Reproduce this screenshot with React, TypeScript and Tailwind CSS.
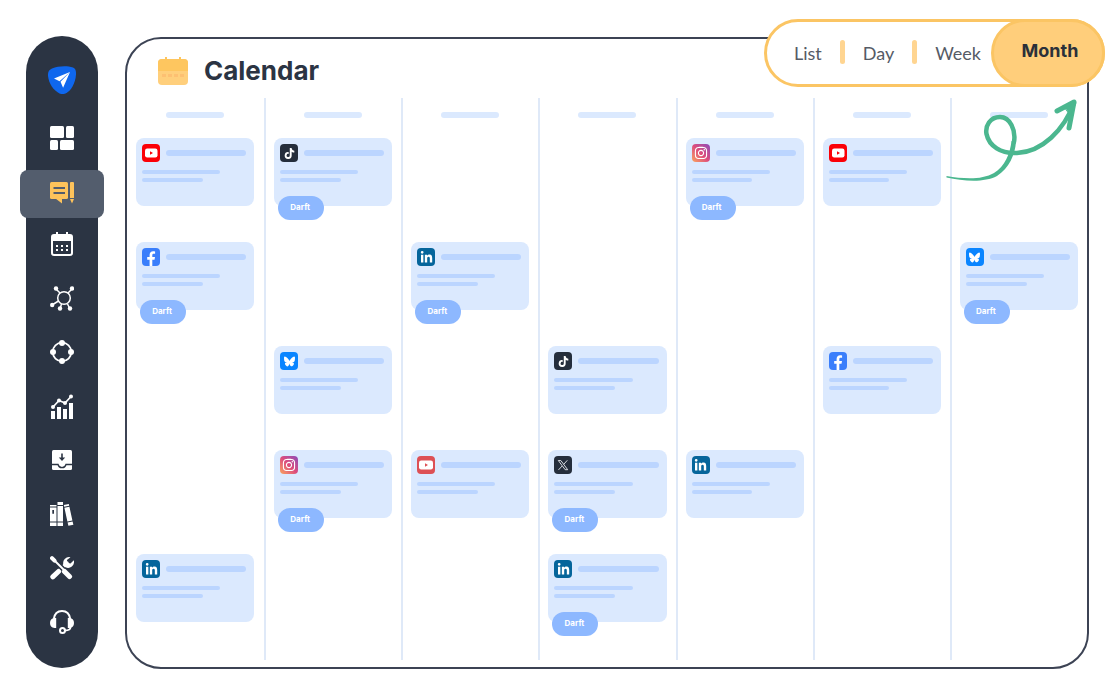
import React from 'react';
import { FaTiktok, FaLinkedinIn, FaInstagram } from 'react-icons/fa';
import { FaBluesky } from 'react-icons/fa6';

type Network = 'youtube' | 'youtubeMuted' | 'tiktok' | 'facebook' | 'linkedin' | 'bluesky' | 'instagram' | 'x';

interface Post {
  network: Network;
  draft?: boolean;
}

// one array per day column, null = empty slot
const columns: (Post | null)[][] = [
  [{ network: 'youtube' }, { network: 'facebook', draft: true }, null, null, { network: 'linkedin' }],
  [{ network: 'tiktok', draft: true }, null, { network: 'bluesky' }, { network: 'instagram', draft: true }, null],
  [null, { network: 'linkedin', draft: true }, null, { network: 'youtubeMuted' }, null],
  [null, null, { network: 'tiktok' }, { network: 'x', draft: true }, { network: 'linkedin', draft: true }],
  [{ network: 'instagram', draft: true }, null, null, { network: 'linkedin' }, null],
  [{ network: 'youtube' }, null, { network: 'facebook' }, null, null],
  [null, { network: 'bluesky', draft: true }, null, null, null],
];

const badgeColors: Record<Network, string> = {
  youtube: 'bg-[#fb0007]',
  youtubeMuted: 'bg-[#dd5055]',
  tiktok: 'bg-[#252e3c]',
  facebook: 'bg-[#3a7efb]',
  linkedin: 'bg-[#05659b]',
  bluesky: 'bg-[#0a85ff]',
  instagram: 'bg-linear-to-tr from-[#f9a25a] via-[#dc4a7c] to-[#8c46b8]',
  x: 'bg-[#252e3c]',
};

const YoutubeGlyph = ({ hole, wide }: { hole: string; wide?: boolean }) => (
  <svg viewBox="0 0 18 18" className="size-[18px]">
    <rect x={wide ? 2 : 3} y="4.5" width={wide ? 14 : 12.5} height="9" rx="2.2" fill="#fff" />
    <path d="M8 7.2v3.6L11 9z" fill={hole} />
  </svg>
);

const glyphs: Record<Network, React.ReactNode> = {
  youtube: <YoutubeGlyph hole="#fb0007" />,
  youtubeMuted: <YoutubeGlyph hole="#dd5055" wide />,
  tiktok: <FaTiktok size={11} />,
  facebook: (
    <svg viewBox="0 0 18 18" className="size-[18px]">
      <path d="M7.6 18v-6.3H5.2V9h2.4V7c0-2.5 1.4-3.8 3.6-3.8.9 0 1.7.1 1.9.2v2.4h-1.4c-1.1 0-1.4.6-1.4 1.4V9h2.7l-.5 2.7h-2.2V18z" fill="#fff" />
    </svg>
  ),
  linkedin: <FaLinkedinIn size={13} />,
  bluesky: <FaBluesky size={11} />,
  instagram: <FaInstagram size={14} />,
  x: (
    <svg viewBox="0 0 18 18" className="size-[18px]" fill="none" stroke="#e8eaee" strokeWidth=".9">
      <path d="M4.300 4.500h2.500l6.900 9.200h-2.500zM13.300 4.300 9.700 8.400M8.100 10 4.500 13.900" />
    </svg>
  ),
};

const PostCard = ({ post }: { post: Post }) => (
  <article className="relative h-[68px] rounded-lg bg-[#dbe9fe] pt-1.5 pr-2 pl-1.5">
    <div className="flex items-center gap-1.5">
      <span className={`flex size-[18px] shrink-0 items-center justify-center rounded-sm text-white ${badgeColors[post.network]}`}>
        {glyphs[post.network]}
      </span>
      <span className="h-1.5 flex-1 rounded-full bg-[#bbd5ff]" />
    </div>
    <div className="mt-2 h-1 w-3/4 rounded-full bg-[#bbd5ff]" />
    <div className="mt-1 h-1 w-7/12 rounded-full bg-[#bbd5ff]" />
    {post.draft && (
      <span className="absolute top-[58px] left-1 flex h-6 w-[46px] items-center justify-center rounded-full bg-[#8db8ff] pr-0.5 pb-0.5 font-['Inter','Liberation_Sans',sans-serif] text-[8px] leading-none font-bold text-white">
        Darft
      </span>
    )}
  </article>
);

const menu = [
  {
    label: 'Dashboard',
    icon: (
      <svg width="24" height="24" fill="currentColor">
        <rect width="14" height="12" rx="1.5" />
        <rect x="16" width="8" height="12" rx="1.5" />
        <rect y="14" width="8" height="10" rx="1.5" />
        <rect x="10" y="14" width="14" height="10" rx="1.5" />
      </svg>
    ),
  },
  {
    label: 'Posts',
    active: true,
    icon: (
      <svg width="24" height="22" fill="currentColor">
        <rect width="18" height="17" rx="1.5" />
        <path d="M5.500 16.500 12 21.500v-5zM20 1a1 1 0 0 1 1-1h2a1 1 0 0 1 1 1v15h-4zM20 17h4l-2 4.500z" />
        <path d="M3.500 6h11.500M3.500 11h11.500" stroke="#535d6d" strokeWidth="2" />
      </svg>
    ),
  },
  {
    label: 'Schedule',
    icon: (
      <svg width="22" height="24" fill="currentColor">
        <rect x="1" y="3" width="20" height="20" rx="2" fill="none" stroke="currentColor" strokeWidth="2" />
        <path d="M1 3h20v6H1zM5 0h2v3H5zM15 0h2v3h-2zM5 13h2v2H5zM10 13h2v2h-2zM15 13h2v2h-2zM5 17h2v2H5zM10 17h2v2h-2zM15 17h2v2h-2z" />
      </svg>
    ),
  },
  {
    label: 'Network',
    icon: (
      <svg width="24" height="25" fill="currentColor">
        <g fill="none" stroke="currentColor" strokeWidth="1.500">
          <circle cx="14" cy="12" r="6.300" />
          <path d="M6 3l4 4M22 3l-4 4M2 19l6.500-4M10 23l1.500-5M20 23l-2.500-5" />
        </g>
        <circle cx="6" cy="2.500" r="2.200" />
        <circle cx="22" cy="2.500" r="2.200" />
        <circle cx="2.200" cy="19" r="2.200" />
        <circle cx="10" cy="22.500" r="2.200" />
        <circle cx="20" cy="22.500" r="2.200" />
      </svg>
    ),
  },
  {
    label: 'Workflow',
    icon: (
      <svg width="24" height="24" fill="currentColor">
        <circle cx="12" cy="12" r="9.300" fill="none" stroke="currentColor" strokeWidth="1.700" />
        <circle cx="12" cy="3" r="3" />
        <circle cx="12" cy="21" r="3" />
        <circle cx="3" cy="12" r="3" />
        <circle cx="21" cy="12" r="3" />
      </svg>
    ),
  },
  {
    label: 'Analytics',
    icon: (
      <svg width="24" height="25" fill="currentColor">
        <path d="M1 17h4v8H1zM7 13h4v12H7zM13 15h4v10h-4zM19 9h4v16h-4z" />
        <path d="M3 13l6-6.500 6 2.500 6-6.500" fill="none" stroke="currentColor" strokeWidth="1.700" />
        <circle cx="3" cy="13" r="2" />
        <circle cx="9" cy="6.500" r="2" />
        <circle cx="15" cy="9" r="2" />
        <circle cx="21" cy="2.500" r="2" />
      </svg>
    ),
  },
  {
    label: 'Inbox',
    icon: (
      <svg width="20" height="20" fill="currentColor">
        <rect width="20" height="20" rx="1.500" />
        <path d="M0 14.500h6c.5 2 2 3.200 4 3.200s3.500-1.200 4-3.200h6" fill="none" stroke="#2b3443" strokeWidth="1.300" />
        <path d="M10 3.500v5" stroke="#2b3443" strokeWidth="1.600" />
        <path d="M6.800 7.500h6.400L10 11z" fill="#2b3443" />
      </svg>
    ),
  },
  {
    label: 'Library',
    icon: (
      <svg width="24" height="24" fill="currentColor">
        <path d="M0 3h6.500v1.500H0zM0 5.500h6.500v14H0zM0 20.500h6.500V24H0zM7.500 0h5.500v3H7.500zM7.500 4h5.500v15.500H7.500zM7.500 20.500h5.500V24H7.500z" />
        <path d="M13.800 3l5-1 .4 1.700-5 1zM14.400 5.700l5-1 3 13.800-5 1zM17.600 20.500l5-1 .8 3.300-5 1z" />
        <path d="M2.300 8h1.700v3.800H2.300z" fill="#2b3443" />
      </svg>
    ),
  },
  {
    label: 'Tools',
    icon: (
      <svg width="24" height="24" fill="none" stroke="currentColor" strokeLinecap="round">
        <path d="M17 7 9 15" strokeWidth="3.500" />
        <path d="M8.500 15.500 2.800 20.800" strokeWidth="5" />
        <path d="M3 3l12 12" strokeWidth="5" stroke="#2b3443" />
        <path d="M3 3l12 12" strokeWidth="2" />
        <path d="M2 2.200l2.500 2.500" strokeWidth="4" />
        <path d="M14.500 15.500l5 5" strokeWidth="5" />
        <path d="M20.500 1.200a6 6 0 0 0-7 7.800l2 2.300A6 6 0 0 0 23.800 4.300l-3.300 3.200-3-.7-.6-2.700z" fill="currentColor" stroke="none" />
      </svg>
    ),
  },
  {
    label: 'Support',
    icon: (
      <svg width="24" height="24" fill="none" stroke="currentColor">
        <path d="M3.800 9C4.500 4 7.500 1 12 1s7.500 3 8.200 8" strokeWidth="2" />
        <path d="M20.500 17c0 2.500-1.500 3.500-5.500 3.500" strokeWidth="1.800" />
        <circle cx="12.500" cy="20.500" r="2.500" strokeWidth="2" />
        <path d="M6.200 8v10H4.500C1.500 18 0 15.800 0 13s1.500-5 4.500-5zM17.800 8v10h1.700c3 0 4.500-2.200 4.500-5s-1.500-5-4.500-5z" fill="currentColor" stroke="none" />
      </svg>
    ),
  },
];

const itemClass = (i: number, active?: boolean) => {
  if (active) return '-mx-1.5 h-12 rounded-lg bg-[#535d6d] pb-0.5 text-[#fec35b]';
  return i === 0 ? 'h-16 text-white' : 'h-[54px] pb-0.5 text-white';
};

const Sidebar = () => (
  <nav aria-label="Main" className="flex w-[72px] shrink-0 flex-col rounded-full bg-[#2b3443] py-[18px]">
    <a href="#" aria-label="Home" className="flex h-[52px] items-center justify-center">
      <svg width="28" height="28" viewBox="0 0 28 28">
        <path d="M4 2.500C10 0 19-.5 25 1.500c2.500 1 3.200 3.500 3 7C27.500 17 23 25 17.500 27.500c-2 .8-4 .8-6 0C5 24 1 17.500 0 10 -.3 6 1 3.800 4 2.500z" fill="#0f67ee" />
        <path d="M22 6 6 12.500l5.500 2.700zM22 6l-9.500 9.800 2.600 6z" fill="#fff" />
      </svg>
    </a>
    {menu.map((item, i) => (
      <button
        key={item.label}
        type="button"
        aria-label={item.label}
        className={`flex items-center justify-center ${itemClass(i, item.active)}`}
      >
        {item.icon}
      </button>
    ))}
  </nav>
);

const Divider = () => <span className="mb-0.5 h-6 w-[5px] rounded-full bg-[#ffd591]" />;

const ViewSwitch = () => (
  <div className="absolute -top-5 -right-[18px] flex h-[68px] items-center rounded-full border-3 border-[#fbc564] bg-white pl-[27px] text-lg text-[#555b66]">
    <div className="mr-2.5 flex items-center gap-[18px]">
      <button type="button">List</button>
      <Divider />
      <button type="button">Day</button>
      <Divider />
      <button type="button">Week</button>
    </div>
    <button
      type="button"
      className="-my-[3px] -mr-[3px] h-[68px] w-[114px] rounded-full border-3 border-[#fbc564] bg-[#ffce7b] pb-1 pl-1 font-['Inter','Liberation_Sans',sans-serif] text-lg font-bold text-[#2b3039]"
    >
      Month
    </button>
  </div>
);

const CurlyArrow = () => (
  <svg width="136" height="90" className="pointer-events-none absolute top-[57px] right-[7px]" fill="none" stroke="#4bb78f" strokeLinecap="round" strokeLinejoin="round">
    <path d="M2.500 80C20 83 38 84 50 77c11-7 16-19 17.500-32l4.500 1C71 59 65 72 53 80c-13 7-34 5-50.500 1.500z" fill="#4bb78f" stroke="none" />
    <path d="M70 46C72 34 66 21 56 21c-10 0-15 9-13.500 17C45 50 57 58 73 57c25-1 47-23 57-50" strokeWidth="4.500" />
    <path d="M113 15l17-9-5 26" strokeWidth="5" />
    <path d="M122 13l8-7-3 14z" fill="#4bb78f" />
  </svg>
);

const App: React.FC = () => {
  return (
    <div className="flex gap-[27px] bg-white pt-9 pr-[19px] pb-8 pl-[26px] font-['Lato','Liberation_Sans',sans-serif]">
      <Sidebar />

      <main className="relative mt-px -mb-px min-w-0 flex-1 rounded-[36px] border-2 border-[#3c4354] bg-white pb-[7px]">
        <header className="flex items-center gap-4 pt-[18px] pb-[13px] pl-[31px]">
          <svg width="30" height="28" viewBox="0 0 30 28">
            <rect y="2" width="30" height="26" rx="4" fill="#ffcf7c" />
            <path d="M0 14V6a4 4 0 0 1 4-4h22a4 4 0 0 1 4 4v8z" fill="#fec65f" />
            <path d="M7 0h2v3H7zM21 0h2v3h-2z" fill="#fec65f" />
            <path d="M4 18.500h22" stroke="#fdc072" strokeWidth="3" strokeDasharray="4 2" />
          </svg>
          <h1 className="font-['Inter','Liberation_Sans',sans-serif] text-[26px] leading-7 font-bold text-[#2b3443]">
            Calendar
          </h1>
        </header>

        <div className="grid grid-cols-7">
          {columns.map((posts, i) => (
            <section
              key={i}
              className={`pt-3.5 pb-[38px] ${i === 0 ? 'pr-2.5 pl-[9px]' : 'border-l-2 border-[#dfe9f8] pr-[9px] pl-2'}`}
            >
              <div className="mx-auto mb-5 h-1.5 w-[58px] rounded-full bg-[#dbe9fe]" />
              <div className="flex flex-col gap-9">
                {posts.map((post, j) =>
                  post ? <PostCard key={j} post={post} /> : <div key={j} className="h-[68px]" />
                )}
              </div>
            </section>
          ))}
        </div>

        <CurlyArrow />
        <ViewSwitch />
      </main>
    </div>
  );
};

export default App;
